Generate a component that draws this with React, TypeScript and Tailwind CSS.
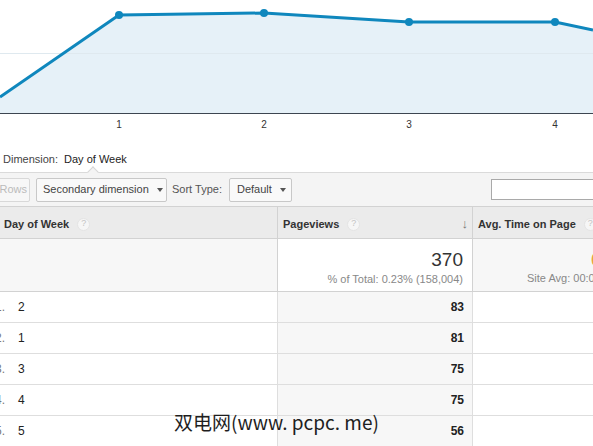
import React from 'react'

const ROWS = [
  { n: 1, day: '2', views: 83 },
  { n: 2, day: '1', views: 81 },
  { n: 3, day: '3', views: 75 },
  { n: 4, day: '4', views: 75 },
  { n: 5, day: '5', views: 56 },
]

const POINTS = [
  [119, 15],
  [264, 13],
  [409, 22],
  [555, 22],
]

function Help() {
  return (
    <span className="ml-2 inline-flex h-[13px] w-[13px] shrink-0 items-center justify-center rounded-full border border-[#e4e4e4] bg-[#f6f6f6] text-[9px] font-normal text-[#c4c4c4]">
      ?
    </span>
  )
}

function Caret() {
  return <span className="ml-2 inline-block border-x-[3.5px] border-t-[4px] border-x-transparent border-t-[#555]" />
}

function Chart() {
  const line = '0,97 ' + POINTS.map(p => p.join(',')).join(' ') + ' 593,30'
  return (
    <svg width="593" height="134" className="block">
      <polygon points={`0,113 ${line} 593,113`} fill="#e6f1f8" />
      <line x1="0" y1="53.5" x2="593" y2="53.5" stroke="#dfe9ef" strokeWidth="1" />
      <polyline points={line} fill="none" stroke="#0f87bd" strokeWidth="3" strokeLinejoin="round" />
      {POINTS.map(([x, y]) => (
        <circle key={x} cx={x} cy={y} r="4" fill="#0f87bd" />
      ))}
      <line x1="0" y1="113.5" x2="593" y2="113.5" stroke="#3d4550" strokeWidth="1" />
      {POINTS.map(([x], i) => (
        <text key={x} x={x} y="128" textAnchor="middle" fontSize="10" fill="#333" fontFamily="Liberation Sans, Arial, sans-serif">
          {i + 1}
        </text>
      ))}
    </svg>
  )
}

export default function App() {
  return (
    <div className="relative h-[446px] w-[593px] overflow-hidden bg-white font-['Liberation_Sans',Arial,sans-serif] text-[#333]">
      <Chart />

      {/* Dimension */}
      <div className="relative flex h-[38px] items-center pl-[3px] pt-[12px] text-[11px]">
        <span className="text-[#444]">Dimension:</span>
        <span className="ml-[6px] text-[#222]">Day of Week</span>
        <span className="absolute left-[89px] top-[34px] h-[8px] w-[8px] rotate-45 border-l border-t border-[#d6d6d6] bg-[#f4f4f4]" />
      </div>

      {/* Toolbar */}
      <div className="flex h-[34px] items-center border-t border-[#dadada] bg-[#f4f4f4] text-[11px]">
        <div className="ml-[-6px] flex h-[24px] w-[36px] items-center justify-end rounded-[2px] border border-[#d8d8d8] bg-[#f7f7f7] pr-[2px] text-[#bbb]">
          Rows
        </div>
        <div className="ml-[6px] flex h-[24px] w-[131px] items-center rounded-[2px] border border-[#c8c8c8] bg-[#f9f9f9] pl-[6px] text-[#444]">
          Secondary dimension
          <Caret />
        </div>
        <span className="ml-[5px] text-[#555]">Sort Type:</span>
        <div className="ml-[7px] flex h-[24px] w-[63px] items-center rounded-[2px] border border-[#c8c8c8] bg-[#f9f9f9] pl-[7px] text-[#444]">
          Default
          <Caret />
        </div>
        <div className="ml-auto mr-[-10px] h-[21px] w-[112px] border border-[#a9a9a9] bg-white" />
      </div>

      {/* Table */}
      <div className="grid grid-cols-[278px_195px_1fr] text-[11px]">
        {/* header */}
        <div className="flex h-[33px] items-center border-y border-r border-[#d2d2d2] bg-[#ebebeb] pl-[4px] pt-[3px] font-bold">
          Day of Week
          <Help />
        </div>
        <div className="flex h-[33px] items-center border-y border-r border-[#d2d2d2] bg-[#ebebeb] pl-[5px] pr-[4px] pt-[3px] font-bold">
          Pageviews
          <Help />
          <span className="ml-auto text-[13px] font-bold text-[#777]">↓</span>
        </div>
        <div className="flex h-[33px] items-center overflow-hidden whitespace-nowrap border-y border-[#d2d2d2] bg-[#ebebeb] pl-[5px] pt-[3px] font-bold">
          Avg. Time on Page
          <Help />
        </div>

        {/* summary */}
        <div className="h-[53px] border-b border-r border-[#d2d2d2] bg-[#f7f7f7]" />
        <div className="flex h-[53px] flex-col items-end border-b border-r border-[#d2d2d2] bg-white pr-[9px] pt-[10px]">
          <span className="text-[19px] leading-[22px] text-[#333]">370</span>
          <span className="text-[11px] text-[#888]">% of Total: 0.23% (158,004)</span>
        </div>
        <div className="relative h-[53px] border-b border-[#d2d2d2] bg-[#f7f7f7]">
          <span className="absolute left-[118px] top-[10px] text-[19px] leading-[22px] text-[#e8a33d]">0</span>
          <span className="absolute left-[54px] top-[31px] whitespace-nowrap text-[11px] text-[#888]">Site Avg: 00:00:45</span>
        </div>

        {ROWS.map(r => (
          <React.Fragment key={r.n}>
            <div className="flex h-[31px] items-center border-b border-r border-[#dedede] bg-white text-[12px]">
              <span className="ml-[-8px] w-[13px] text-right text-[#777]">{r.n}.</span>
              <span className="ml-[13px] text-[#222]">{r.day}</span>
            </div>
            <div className="flex h-[31px] items-center justify-end border-b border-r border-[#dedede] bg-[#f7f7f7] pr-[8px] text-[12px] font-bold text-[#222]">
              {r.views}
            </div>
            <div className="h-[31px] border-b border-[#dedede] bg-white" />
          </React.Fragment>
        ))}
      </div>

      {/* watermark */}
      <div className="absolute left-[174px] top-[408px] whitespace-nowrap font-['Noto_Sans_CJK_SC',sans-serif] text-[19px] text-[#1e1e1e]">
        双电网(www. pcpc. me)
      </div>
    </div>
  )
}
